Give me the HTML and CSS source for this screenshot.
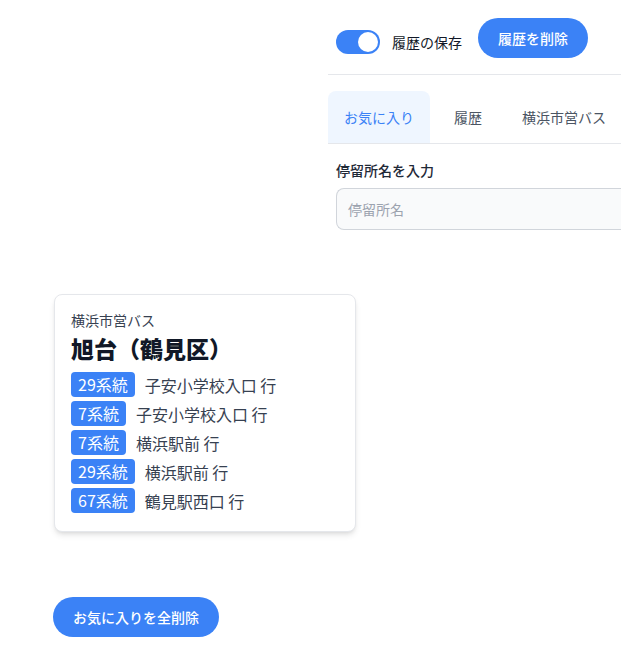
FILE: index.html
```html
<!DOCTYPE html>
<html lang="ja">
<head>
<meta charset="utf-8">
<title>バス停</title>
<link rel="stylesheet" href="styles.css">
</head>
<body>
<div class="page">
  <section class="panel">
    <div class="toolbar">
      <div class="toggle-group">
        <span class="toggle"><span class="knob"></span></span>
        <span class="toggle-label">履歴の保存</span>
      </div>
      <button class="btn btn-top">履歴を削除</button>
    </div>
    <div class="divider"></div>
    <nav class="tabs">
      <span class="tab active">お気に入り</span>
      <span class="tab">履歴</span>
      <span class="tab">横浜市営バス</span>
    </nav>
    <div class="search">
      <label class="search-label">停留所名を入力</label>
      <div class="input"><span class="placeholder">停留所名</span></div>
    </div>
  </section>

  <section class="favorites">
    <div class="card">
      <div class="operator">横浜市営バス</div>
      <div class="stop-name">旭台（鶴見区）</div>
      <ul class="routes">
        <li class="route"><span class="badge">29系統</span><span class="dest">子安小学校入口 行</span></li>
        <li class="route"><span class="badge">7系統</span><span class="dest">子安小学校入口 行</span></li>
        <li class="route"><span class="badge">7系統</span><span class="dest">横浜駅前 行</span></li>
        <li class="route"><span class="badge">29系統</span><span class="dest">横浜駅前 行</span></li>
        <li class="route"><span class="badge">67系統</span><span class="dest">鶴見駅西口 行</span></li>
      </ul>
    </div>
    <button class="btn btn-clear">お気に入りを全削除</button>
  </section>
</div>
</body>
</html>
```

FILE: styles.css
```css
html, body {
  margin: 0;
  padding: 0;
  background: #ffffff;
  overflow: hidden;
}
body {
  font-family: "Noto Sans CJK JP", "Noto Sans", sans-serif;
  color: #111827;
  font-size: 14px;
  line-height: 20px;
}
.page {
  width: 621px;
  height: 650px;
  overflow: hidden;
}
.panel {
  margin-left: 328px;
  padding-top: 18px;
  white-space: nowrap;
}
.toolbar {
  display: flex;
  align-items: center;
  padding-left: 8px;
}
.toggle-group {
  display: flex;
  align-items: center;
  gap: 12px;
  margin-top: 8px;
}
.toggle {
  display: flex;
  justify-content: flex-end;
  align-items: center;
  width: 44px;
  height: 24px;
  box-sizing: border-box;
  padding: 2px;
  border-radius: 12px;
  background: #3b82f6;
}
.knob {
  width: 20px;
  height: 20px;
  border-radius: 50%;
  background: #ffffff;
}
.toggle-label {
  color: #111827;
  font-size: 14px;
}
.btn {
  font-family: inherit;
  border: none;
  background: #3b82f6;
  color: #ffffff;
  font-size: 14px;
  font-weight: 500;
  height: 40px;
  padding: 0 20px;
  border-radius: 20px;
  line-height: 40px;
  cursor: pointer;
}
.btn-top {
  margin-left: 16px;
}
.divider {
  height: 1px;
  background: #e5e7eb;
  margin-top: 16px;
}
.tabs {
  display: flex;
  gap: 8px;
  margin-top: 16px;
  border-bottom: 1px solid #e5e7eb;
}
.tab {
  padding: 16px;
  color: #4b5563;
  font-size: 14px;
  line-height: 20px;
  border-radius: 8px 8px 0 0;
}
.tab.active {
  color: #3b82f6;
  background: #eff6ff;
}
.search {
  padding: 16px 0 0 8px;
}
.search-label {
  display: block;
  font-size: 14px;
  font-weight: 500;
  color: #1f2937;
  line-height: 20px;
}
.input {
  margin-top: 8px;
  height: 42px;
  box-sizing: border-box;
  border: 1px solid #d1d5db;
  border-right: none;
  border-radius: 8px 0 0 8px;
  background: #f9fafb;
  padding: 0 11px;
  display: flex;
  align-items: center;
}
.placeholder {
  color: #9ca3af;
  font-size: 14px;
}
.favorites {
  padding: 64px 0 0 53px;
}
.card {
  width: 302px;
  box-sizing: border-box;
  margin-left: 1px;
  padding: 15px 16px 18px;
  border: 1px solid #e5e7eb;
  border-radius: 8px;
  background: #ffffff;
  box-shadow: 0 4px 6px -1px rgba(0,0,0,0.1), 0 2px 4px -2px rgba(0,0,0,0.1);
}
.operator {
  font-size: 14px;
  line-height: 20px;
  color: #374151;
}
.stop-name {
  margin-top: 4px;
  font-size: 23px;
  line-height: 28px;
  font-weight: 900;
  color: #111827;
}
.routes {
  list-style: none;
  margin: 10px 0 0;
  padding: 0;
  display: flex;
  flex-direction: column;
  gap: 4px;
}
.route {
  display: flex;
  align-items: center;
  gap: 10px;
  height: 25px;
}
.badge {
  background: #3b82f6;
  color: #ffffff;
  font-size: 16px;
  line-height: 25px;
  height: 25px;
  padding: 0 7px;
  border-radius: 4px;
}
.dest {
  font-size: 16px;
  color: #374151;
}
.btn-clear {
  margin-top: 65px;
}
```
